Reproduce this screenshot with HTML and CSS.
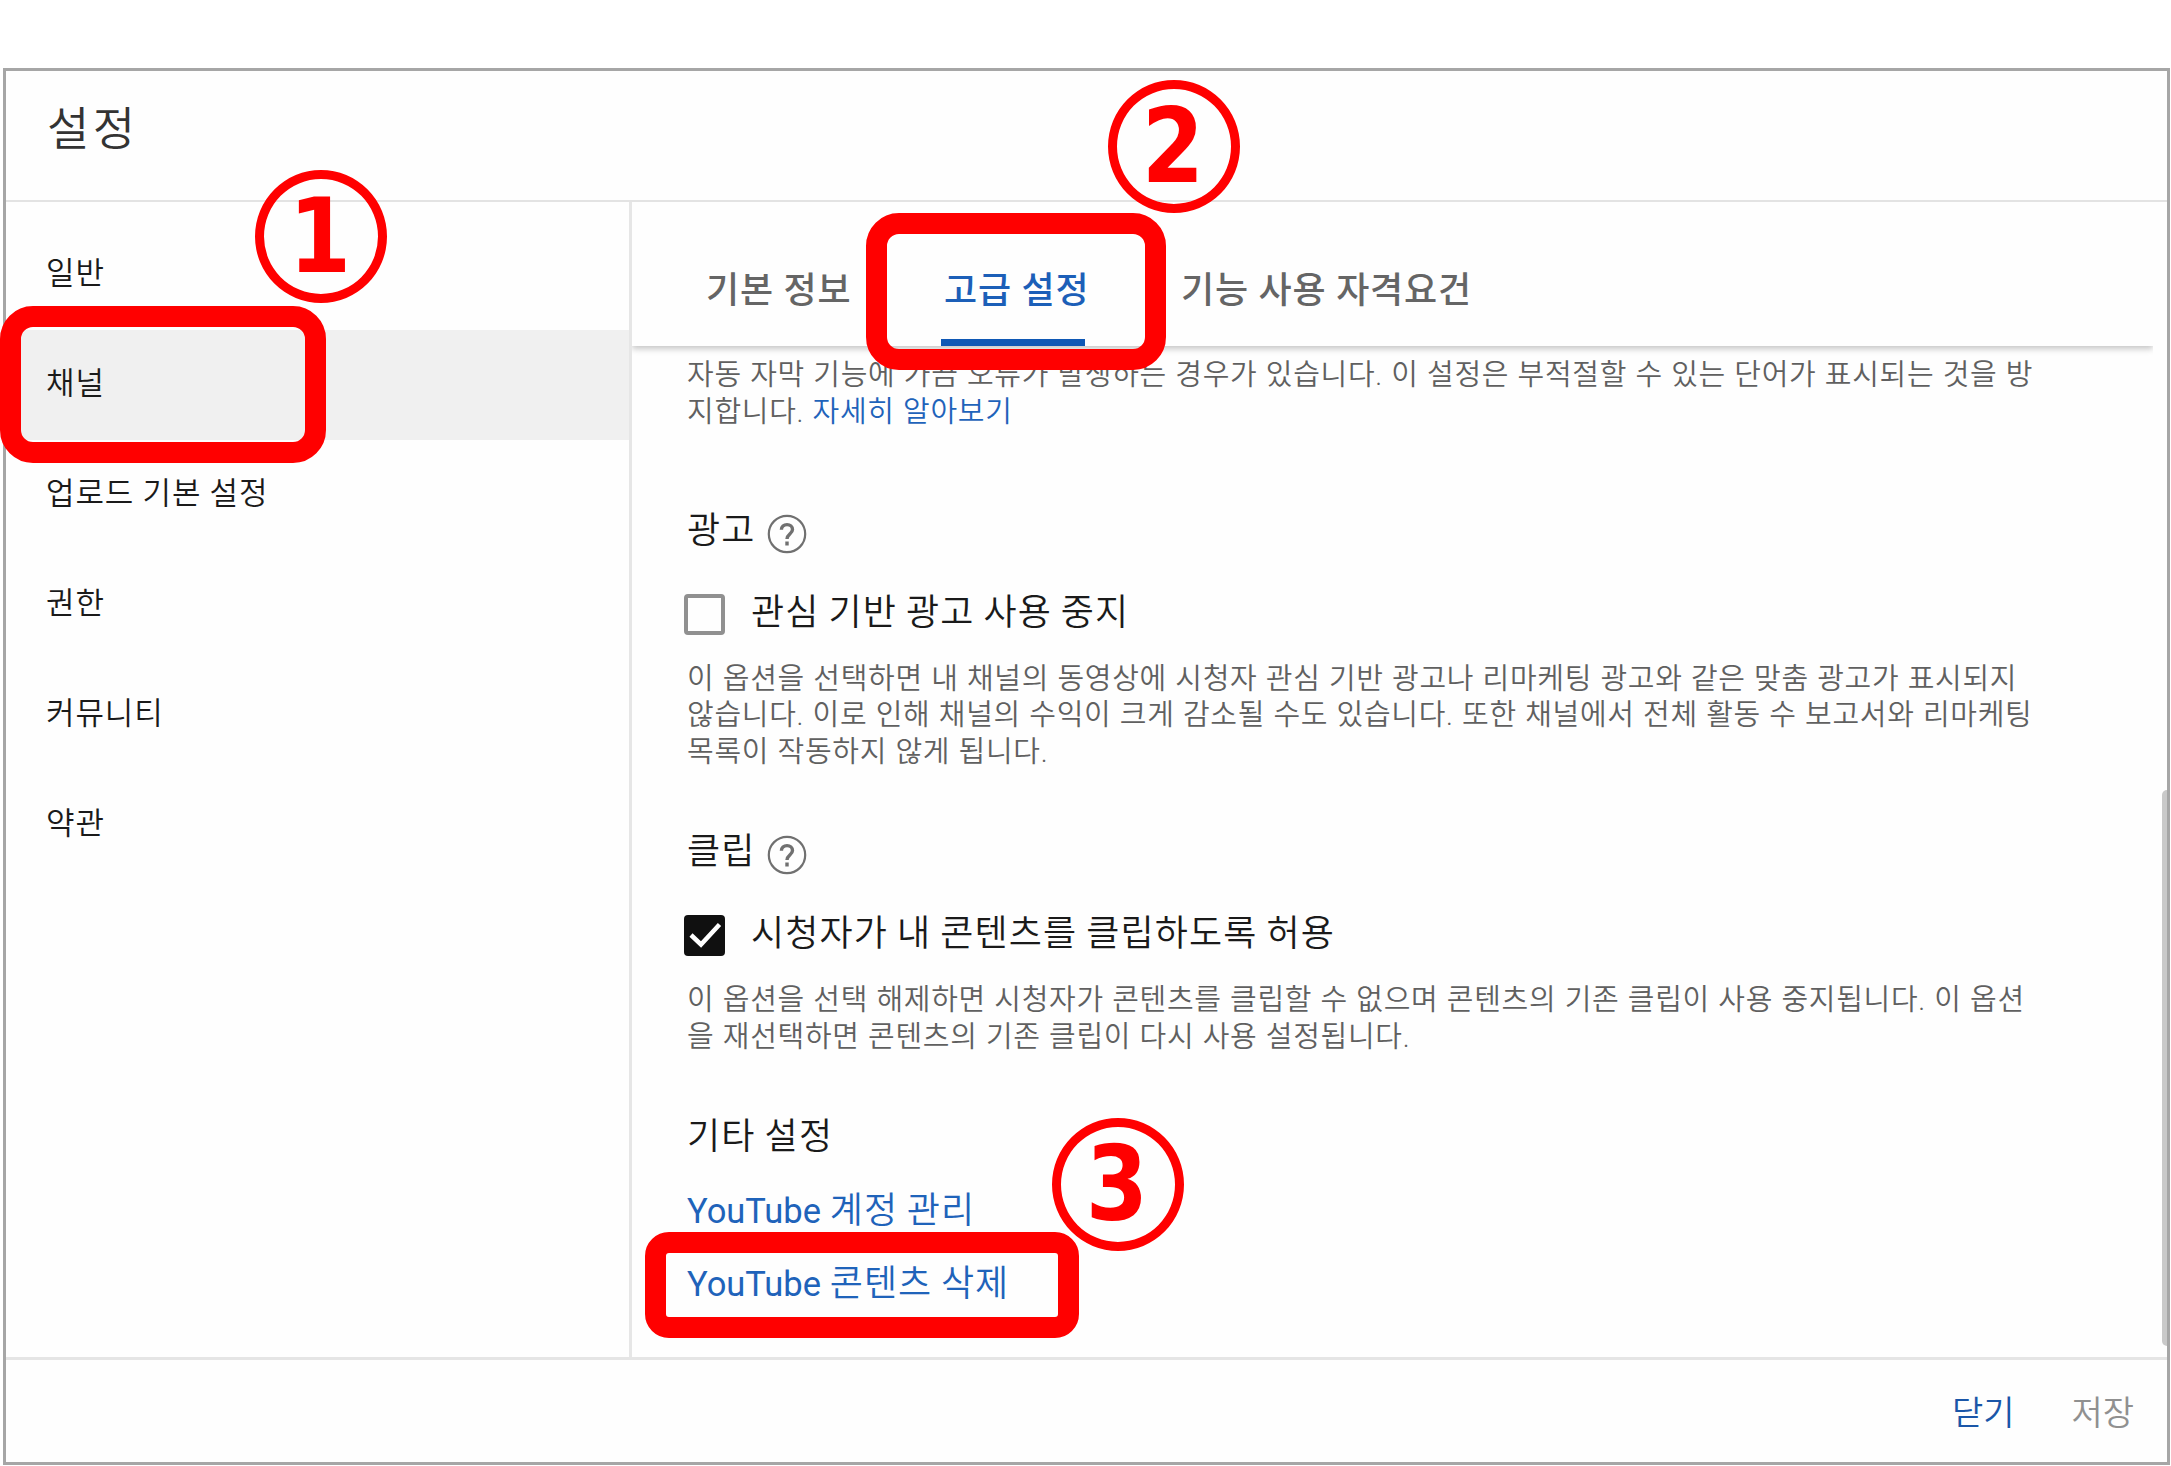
FILE: index.html
```html
<!DOCTYPE html>
<html lang="ko">
<head>
<meta charset="utf-8" />
<title>설정</title>
<link rel="stylesheet" href="styles.css">
</head>

<body>
<div class="dialog">
    <div class="header">설정</div>
    <div class="main">
        <ul class="menu">
            <li>일반</li>
            <li class="on">채널</li>
            <li>업로드 기본 설정</li>
            <li>권한</li>
            <li>커뮤니티</li>
            <li>약관</li>
        </ul>
        <div class="panel">
            <div class="tabs">
                <a class="tab">기본 정보</a>
                <a class="tab on">고급 설정</a>
                <a class="tab last">기능 사용 자격요건</a>
            </div>
            <div class="content">
                <p class="desc">자동 자막 기능에 가끔 오류가 발생하는 경우가 있습니다. 이 설정은 부적절할 수 있는 단어가 표시되는 것을 방<br />지합니다. <a class="link">자세히 알아보기</a></p>

                <h3 class="first">광고
                    <svg class="help" viewBox="0 0 40 40"><circle cx="20" cy="20" r="18.2" /><path d="M14.4 15.8c0-3 2.4-5.2 5.6-5.2s5.5 2 5.5 5c0 4.4-5.5 4.6-5.5 9.4M20 27.6v3.8" /></svg>
                </h3>
                <div class="row"><span class="box"></span><span class="label">관심 기반 광고 사용 중지</span></div>
                <p class="desc">이 옵션을 선택하면 내 채널의 동영상에 시청자 관심 기반 광고나 리마케팅 광고와 같은 맞춤 광고가 표시되지<br />않습니다. 이로 인해 채널의 수익이 크게 감소될 수도 있습니다. 또한 채널에서 전체 활동 수 보고서와 리마케팅<br />목록이 작동하지 않게 됩니다.</p>

                <h3>클립
                    <svg class="help" viewBox="0 0 40 40"><circle cx="20" cy="20" r="18.2" /><path d="M14.4 15.8c0-3 2.4-5.2 5.6-5.2s5.5 2 5.5 5c0 4.4-5.5 4.6-5.5 9.4M20 27.6v3.8" /></svg>
                </h3>
                <div class="row"><span class="box checked"><svg viewBox="0 0 41 41"><path d="M7 20l10 9.500L35.500 9.500" /></svg></span><span class="label">시청자가 내 콘텐츠를 클립하도록 허용</span></div>
                <p class="desc">이 옵션을 선택 해제하면 시청자가 콘텐츠를 클립할 수 없으며 콘텐츠의 기존 클립이 사용 중지됩니다. 이 옵션<br />을 재선택하면 콘텐츠의 기존 클립이 다시 사용 설정됩니다.</p>

                <h3>기타 설정</h3>
                <div class="links">
                    <a class="link"><span class="en">YouTube</span> 계정 관리</a>
                    <a class="link"><span class="en">YouTube</span> 콘텐츠 삭제</a>
                </div>
            </div>
            <div class="thumb"></div>
        </div>
    </div>
    <div class="footer">
        <a class="close">닫기</a>
        <a class="save">저장</a>
    </div>
</div>

<!-- 순서 표시 -->
<div class="mark mark1"></div>
<div class="mark mark2"></div>
<div class="mark mark3"></div>
<div class="num num1"><span>1</span></div>
<div class="num num2"><span>2</span></div>
<div class="num num3"><span>3</span></div>
</body>
</html>
```
FILE: styles.css
```css
*{ box-sizing:border-box; }

body{
	margin:0;
	height:1466px;
	padding:68px 1px 1px 3px;
	position:relative;
	overflow:hidden;
	background:#fff;
	font-family:Roboto, "Noto Sans CJK KR", sans-serif;
	font-weight:350;
	color:#1a1a1a;
	white-space:nowrap;
}
h3, p, ul{ margin:0; padding:0; font-weight:inherit; }

.dialog{
	height:1397px;
	border:3px solid #a6a6a6;
	background:#fefefe;
	display:flex;
	flex-direction:column;
}
.header{
	height:131px;
	padding-left:41px;
	border-bottom:2px solid #e3e3e3;
	font-size:46px;
	letter-spacing:3.4px;
	line-height:117px;
	color:#333;
}
.main{
	height:1155px;
	display:flex;
}

/* 왼쪽 메뉴 */
.menu{
	width:626px;
	padding-top:18px;
	border-right:3px solid #e6e6e6;
	list-style:none;
	font-size:31px;
	letter-spacing:.9px;
	word-spacing:-.2px;
}
.menu li{
	height:110px;
	padding-left:40px;
	line-height:108px;
}
.menu .on{ background:#f0f0f0; }

.panel{
	flex:1;
	position:relative;
}
.tabs{
	position:relative;
	z-index:1;
	display:flex;
	width:1521px;
	height:144px;
	padding-left:73px;
	background:#fefefe;
	box-shadow:0 3px 6px rgba(0,0,0,.22);
	clip-path:inset(0 0 -14px 0);
	font-size:36px;
	font-weight:500;
	letter-spacing:.8px;
	line-height:178px;
	color:#656565;
}
.tab{
	width:144px;
	margin-right:92px;
	text-indent:1px;
}
.tab.on{
	border-bottom:7px solid #0f58b5;
	text-indent:3px;
	color:#1c5fb8;
}
.tab.last{ text-indent:4px; }

.content{ padding:11px 0 0 55px; }
.desc{
	font-size:29px;
	letter-spacing:.7px;
	word-spacing:.6px;
	line-height:36.8px;
	color:#606060;
}
.link{ color:#1f63ba; }
h3{
	display:flex;
	align-items:center;
	height:40px;
	margin:61px 0 43px;
	font-size:36px;
	letter-spacing:1.2px;
	word-spacing:-1px;
	line-height:40px;
}
h3.first{ margin-top:80px; }
.help{
	width:40px;
	height:40px;
	margin:6px 0 0 11px;
	fill:none;
	stroke:#707070;
	stroke-width:2.2;
}
.help path{ stroke-width:3.4; }
.row{
	display:flex;
	height:41px;
	margin-bottom:26px;
	margin-left:-3px;
	font-size:36px;
	letter-spacing:1.15px;
	word-spacing:-1px;
	line-height:38px;
}
.box{
	width:41px;
	height:41px;
	margin-right:26px;
	border:4px solid #909090;
	border-radius:4px;
}
.box.checked{
	border:0;
	background:#101010;
}
.box svg{
	display:block;
	fill:none;
	stroke:#fff;
	stroke-width:4.5;
}
.links{
	display:flex;
	flex-direction:column;
	margin-top:-25px;
	font-size:36px;
	letter-spacing:1px;
	word-spacing:-1px;
	line-height:73px;
}
.en{
	font-size:34.5px;
	font-weight:400;
	letter-spacing:0;
}

/* 스크롤바 */
.thumb{
	position:absolute;
	right:0;
	top:588px;
	width:5px;
	height:556px;
	border-radius:5px 0 0 5px;
	background:#c9c9c9;
}

.footer{
	height:105px;
	display:flex;
	justify-content:flex-end;
	gap:57px;
	padding:4px 33px 0 0;
	border-top:3px solid #e5e5e5;
	font-size:34px;
	line-height:98px;
}
.close{ color:#1a56a8; }
.save{ color:#909090; }

/* 빨간 테두리와 번호 */
.mark{
	position:absolute;
	z-index:5;
	border:21px solid #f00;
	border-radius:33px;
}
.mark1{ left:0; top:306px; width:326px; height:157px; }
.mark2{ left:866px; top:213px; width:300px; height:157px; }
.mark3{ left:645px; top:1232px; width:434px; height:106px; border-radius:24px; }

.num{
	position:absolute;
	z-index:6;
	width:132px;
	height:133px;
	border:9px solid #f00;
	border-radius:50%;
	font:bold 103px/114px "DejaVu Sans", sans-serif;
	text-align:center;
	color:#f00;
}
.num span{
	display:block;
	margin-left:-2px;
	transform:scaleX(.87);
}
.num1{ left:255px; top:170px; }
.num2{ left:1108px; top:80px; }
.num3{ left:1052px; top:1118px; }
```
